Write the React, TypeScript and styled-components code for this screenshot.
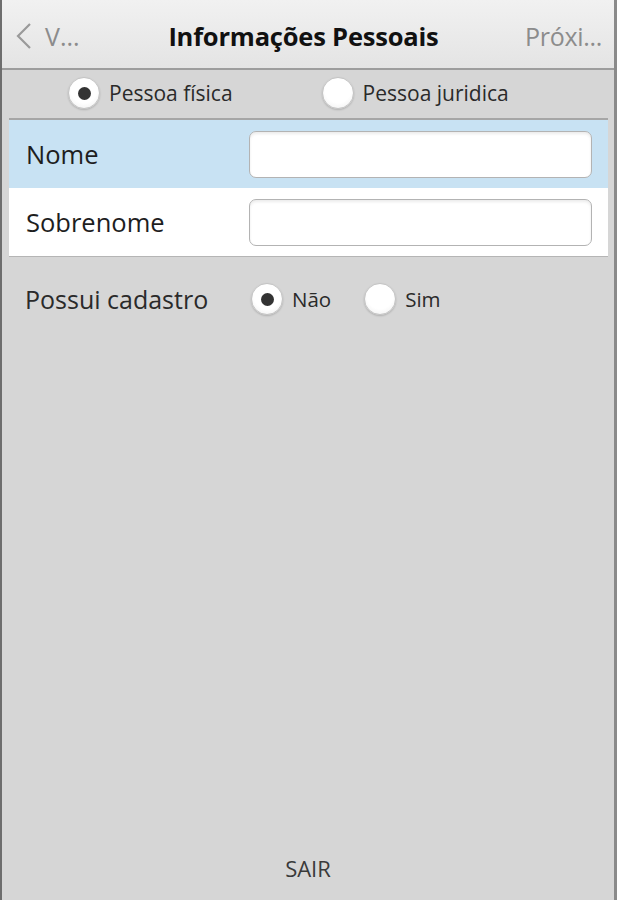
import React, { FC } from 'react';
import styled, { createGlobalStyle } from 'styled-components';

const GlobalStyle = createGlobalStyle`
  html, body {
    margin: 0;
    padding: 0;
    background: #d6d6d6;
  }
  * {
    box-sizing: border-box;
  }
`;

const Screen = styled.div`
  width: 617px;
  height: 900px;
  display: flex;
  flex-direction: column;
  background: #d6d6d6;
  border-left: 2px solid #6e6e6e;
  border-right: 3px solid #8a8a8a;
  font-family: 'Open Sans', 'Noto Sans', sans-serif;
  color: #262626;
`;

const Header = styled.header`
  height: 70px;
  display: grid;
  grid-template-columns: 1fr auto 1fr;
  align-items: center;
  padding: 4px 12px 0 13px;
  background: linear-gradient(#f1f1f1, #e4e4e4);
  border-bottom: 2px solid #9d9d9d;
`;

const BackButton = styled.div`
  display: flex;
  align-items: center;
  gap: 12px;
  font-size: 25px;
  color: #8c8c8c;
`;

const Title = styled.h1`
  margin: 0 10px 0 0;
  font-size: 25.5px;
  font-weight: 700;
  color: #111;
  letter-spacing: -0.2px;
`;

const NextButton = styled.div`
  justify-self: end;
  font-size: 25px;
  color: #8c8c8c;
  letter-spacing: -0.3px;
`;

const TypeBar = styled.div`
  height: 48px;
  display: flex;
  align-items: center;
  gap: 89px;
  padding: 0 0 2px 66px;
`;

const Option = styled.label<{ $size: number }>`
  display: flex;
  align-items: center;
  gap: 9px;
  font-size: ${({ $size }) => $size}px;
  color: #2a2a2a;
`;

const RadioCircle = styled.span<{ $checked: boolean }>`
  width: 32px;
  height: 32px;
  border-radius: 50%;
  border: 1px solid #c4c4c4;
  background: radial-gradient(circle at 50% 40%, #ffffff 55%, #ececec 100%);
  box-shadow: 0 1px 2px rgba(0, 0, 0, 0.18);
  display: flex;
  align-items: center;
  justify-content: center;

  &::after {
    content: '';
    width: 13px;
    height: 13px;
    border-radius: 50%;
    background: #333;
    display: ${({ $checked }) => ($checked ? 'block' : 'none')};
  }
`;

const FormGroup = styled.div`
  margin: 0 6px 0 7px;
  border-top: 2px solid #a6a6a6;
  border-bottom: 1px solid #b5b5b5;
`;

const FieldRow = styled.div<{ $active?: boolean }>`
  height: 68px;
  display: grid;
  grid-template-columns: 223px 1fr;
  align-items: center;
  padding: 0 16px 0 17px;
  background: ${({ $active }) => ($active ? '#c8e2f3' : '#ffffff')};
`;

const FieldLabel = styled.span`
  font-size: 25.5px;
  color: #1e1e1e;
`;

const TextInput = styled.input`
  height: 47px;
  width: 100%;
  border: 1px solid #b3b3b3;
  border-radius: 7px;
  background: #fff;
  box-shadow: inset 0 2px 3px rgba(0, 0, 0, 0.08);
  outline: none;
`;

const QuestionRow = styled.div`
  height: 84px;
  display: grid;
  grid-template-columns: 226px auto;
  align-items: center;
  padding-left: 23px;
`;

const QuestionLabel = styled.span`
  font-size: 25px;
  color: #2a2a2a;
`;

const QuestionOptions = styled.div`
  display: flex;
  align-items: center;
  gap: 33px;
`;

const Spacer = styled.div`
  flex: 1;
`;

const Footer = styled.footer`
  height: 62px;
  display: flex;
  justify-content: center;
  padding-top: 15px;
  font-size: 22px;
  color: #3a3a3a;
`;

interface IRadioProps {
  label: string;
  checked?: boolean;
  size: number;
}

const Radio: FC<IRadioProps> = ({ label, checked = false, size }) => (
  <Option $size={size}>
    <RadioCircle $checked={checked} />
    {label}
  </Option>
);

const Chevron = () => (
  <svg width="18" height="28" viewBox="0 0 18 28">
    <path d="M15 2 L3 14 L15 26" fill="none" stroke="#9a9a9a" strokeWidth="2.2" />
  </svg>
);

const App: FC = () => {
  return (
    <>
      <GlobalStyle />
      <Screen>
        <Header>
          <BackButton>
            <Chevron />
            V...
          </BackButton>
          <Title>Informações Pessoais</Title>
          <NextButton>Próxi...</NextButton>
        </Header>

        <TypeBar>
          <Radio label="Pessoa física" checked size={21} />
          <Radio label="Pessoa juridica" size={21} />
        </TypeBar>

        <FormGroup>
          <FieldRow $active>
            <FieldLabel>Nome</FieldLabel>
            <TextInput />
          </FieldRow>
          <FieldRow>
            <FieldLabel>Sobrenome</FieldLabel>
            <TextInput />
          </FieldRow>
        </FormGroup>

        <QuestionRow>
          <QuestionLabel>Possui cadastro</QuestionLabel>
          <QuestionOptions>
            <Radio label="Não" checked size={20.5} />
            <Radio label="Sim" size={20.5} />
          </QuestionOptions>
        </QuestionRow>

        <Spacer />

        <Footer>SAIR</Footer>
      </Screen>
    </>
  );
};

export default App;
